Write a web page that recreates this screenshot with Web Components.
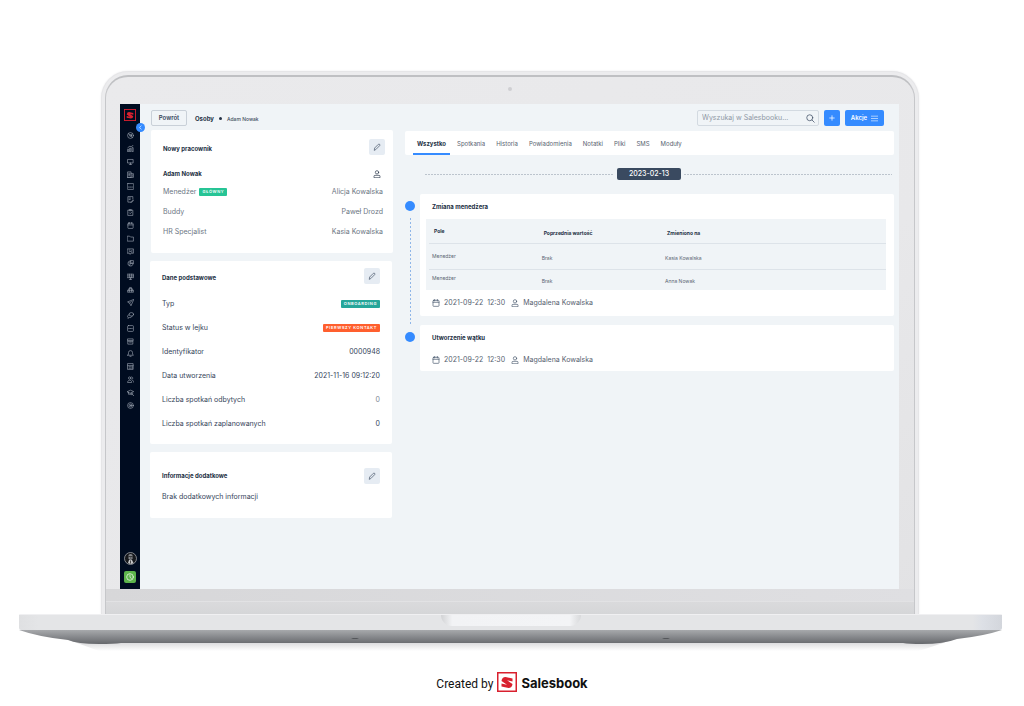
<!DOCTYPE html>
<html lang="pl">
<head>
<meta charset="utf-8">
<meta name="viewport" content="width=device-width, initial-scale=1">
<title>Salesbook – Adam Nowak</title>
<style>
  body { margin: 0; background: #fff; font-family: Inter, "Liberation Sans", sans-serif; color: #2d3a4b; }
</style>
</head>
<body>
<salesbook-page></salesbook-page>

<script>
const ICONS = {
  dash: '<circle cx="12" cy="12" r="10"/><circle cx="12" cy="12" r="3"/><path d="M5 6l5 4M14 14l4 5M18 7l-4 3"/>',
  chart: '<path d="M2 22v-7h4v7zM9 22V11h4v11zM17 22V9h4v13zM3 9l7-5 4 2 7-5"/>',
  monitor: '<path d="M3 5h18v12H3zM8 22h8M12 17v5"/>',
  building: '<path d="M2 22V3h12v19zM14 9h8v13H2M6 8h4M6 12h4M6 16h4M18 13v5"/>',
  crm: '<rect x="1" y="2" width="22" height="20" rx="2"/><path d="M5 14h3M11 14h3M17 14h2"/>',
  note: '<path d="M20 10V2H3v19h9M7 7h5M7 12h4M14 20l7-7 2 2-7 7h-2z"/>',
  task: '<path d="M4 4h16v18H4zM9 2h6v4H9zM8 13l3 3 5-5"/>',
  calendar: '<rect x="3" y="4" width="18" height="18" rx="2"/><path d="M3 10h18M8 1v5M16 1v5"/>',
  folder: '<path d="M2 4h7l3 3h10v14H2z"/>',
  board: '<path d="M2 3h20v15h-8l-4 4v-4H2zM6 14l4-4 3 3 5-6M7 7h3M15 14h3"/>',
  globe: '<path d="M14 3a9 9 0 1 0 7 11M12 12h10M13 2h9v8h-9zM6 8l5 4-2 7"/>',
  grid: '<path d="M1 4h22v12H1zM1 10h22M8 4v12M16 4v12M12 16v6M8 22h8"/>',
  team: '<path d="M2 20l4-11h12l4 11zM2 15h20M9 9l-1 11M15 9l1 11M9 5h6"/>',
  send: '<path d="M22 2L2 10l7 4 4 8zM9 14l6-6"/>',
  chat: '<ellipse cx="15" cy="8" rx="8" ry="6"/><path d="M7 9c-7 3-6 8-3 9l-1 4 5-3c5 1 9-1 9-5"/>',
  sms: '<rect x="2" y="2" width="20" height="20" rx="3"/><path d="M6 12h2M11 12h2M16 12h2"/>',
  archive: '<path d="M3 3h18v7H3zM4 10h16v11H4zM9 14h6"/>',
  bell: '<path d="M2 18h20l-3-4V9a7 7 0 0 0-14 0v5zM10 22h4"/>',
  calc: '<path d="M3 2h18v20H3zM3 9h18M7 13h2M12 13h2M7 18h2M12 18h2M18 12v7"/>',
  users: '<circle cx="9" cy="7" r="4"/><path d="M2 21c0-9 14-9 14 0zM16 3c6 1 5 8 0 8M18 14c4 1 5 4 5 7"/>',
  grad: '<path d="M1 9l11-5 11 5-11 5zM5 11v7h7M14 17a3 3 0 1 0 6 0a3 3 0 1 0-6 0M20 20l3 3"/>',
  gear: '<circle cx="12" cy="12" r="10"/><circle cx="12" cy="12" r="5"/><circle cx="12" cy="12" r="1"/>',
  pencil: '<path d="M4 21l1-6L16 4q2-2 4 0t0 4L9 19z"/>',
  person: '<circle cx="12" cy="7" r="5"/><path d="M3 22v-3q0-3 3-3h12q3 0 3 3v3z"/>',
  search: '<circle cx="10" cy="10" r="8"/><path d="M16 16l6 6"/>',
  plus: '<path d="M12 3v18M3 12h18"/>',
  menu: '<path d="M1 4h22M1 12h22M1 20h22"/>',
  left: '<path d="M15 4l-7 8 7 8"/>',
  clock: '<circle cx="12" cy="12" r="10"/><path d="M12 6v7l4 3"/>'
};

function define(name, css, html, setup) {
  const tpl = document.createElement('template');
  tpl.innerHTML = '<style>*{box-sizing:border-box}' + css + '</style>' + html;
  customElements.define(name, class extends HTMLElement {
    constructor() {
      super();
      this.attachShadow({ mode: 'open' }).append(tpl.content.cloneNode(true));
    }
    connectedCallback() { if (setup) setup(this, this.shadowRoot); }
  });
}

define('ui-icon',
  ':host{display:inline-block;width:8px;height:8px;flex:none}svg{display:block;width:100%;height:100%;fill:none;stroke:currentColor;stroke-width:var(--stroke,2);stroke-linejoin:round;stroke-linecap:round}',
  '<svg viewBox="0 0 24 24" aria-hidden="true"></svg>',
  (el, root) => { root.querySelector('svg').innerHTML = ICONS[el.getAttribute('name')] || ''; });

define('brand-mark',
  ':host{display:block;flex:none}svg{display:block;width:100%;height:100%}',
  `<svg viewBox="0 0 40 40" role="img" aria-label="Salesbook"><rect x="1.5" y="1.5" width="37" height="37" fill="none" stroke="#d9202e" stroke-width="3"/>
   <path fill="#d9202e" d="M17 10L31 13V19L20 16.500L31 24Q30 32 23 32L9 29V23L20 25.500L9 18Q10 10 17 10Z"/></svg>`);

define('status-badge',
  ':host{display:inline-flex;align-items:center;height:8px;padding:0 3px;border-radius:1px;background:var(--tone,#26c495);color:#fff;font-size:4px;line-height:8px;font-weight:600;letter-spacing:.15em;white-space:nowrap;text-transform:uppercase}',
  '<slot></slot>');

define('edit-button',
  ':host{display:block}button{display:grid;place-items:center;width:16px;height:16px;border:0;border-radius:2px;padding:0;background:#e6ecf3;color:#3c4c61}',
  '<button type="button" aria-label="Edytuj"><ui-icon name="pencil"></ui-icon></button>');

define('side-nav',
  `:host{display:flex;flex-direction:column;align-items:center;background:#000c20;color:#a9b1bd;padding:5px 0 6px;position:relative}
   brand-mark{width:12px;height:12px;margin-bottom:11px}
   nav{display:flex;flex-direction:column;justify-content:space-between;height:277px}
   a{display:block;color:inherit;height:7px}
   ui-icon{width:7px;height:7px;display:block}
   .toggle{position:absolute;right:-5px;top:19px;width:9px;height:9px;border:0;border-radius:50%;padding:0;background:#358bff;color:#fff;display:grid;place-items:center;z-index:1}
   .toggle ui-icon{width:5px;height:5px}
   .avatar{width:13px;height:13px;margin-top:auto;margin-bottom:6px}
   .timer{width:12px;height:12px;border:0;border-radius:2px;padding:0;background:#5db54b;color:#fff;display:grid;place-items:center}
   .timer ui-icon{width:8px;height:8px}`,
  `<brand-mark></brand-mark>
   <button class="toggle" type="button" aria-label="Zwiń menu"><ui-icon name="left" style="--stroke:3"></ui-icon></button>
   <nav aria-label="Menu główne"></nav>
   <svg class="avatar" viewBox="0 0 26 26" aria-hidden="true"><circle cx="13" cy="13" r="12" fill="#16181c" stroke="#a5a8ad" stroke-width="1.500"/><path d="M9 6q4-4 8 0v7q-4 6-8 0z" fill="#85888d"/><path d="M8 22l2-6h6l3 6q-5 4-11 0z" fill="#c5c6c8"/><path d="M9 9h8M12 12h3M13 17v6" stroke="#222" stroke-width="1.500"/></svg>
   <button class="timer" type="button" aria-label="Czas pracy"><ui-icon name="clock"></ui-icon></button>`,
  (el, root) => {
    const names = 'dash chart monitor building crm note task calendar folder board globe grid team send chat sms archive bell calc users grad gear'.split(' ');
    root.querySelector('nav').innerHTML = names.map(n => `<a href="#${n}" aria-label="${n}"><ui-icon name="${n}"></ui-icon></a>`).join('');
  });

define('top-bar',
  `:host{display:flex;align-items:center;height:16px;padding:0 10px 0 1px;font-size:6px;line-height:16px}
   button{font:inherit;height:16px;border-radius:2px;padding:0;border:0;display:flex;align-items:center;justify-content:center}
   .back{width:36px;border:1px solid #c9d0d8;background:transparent;color:#35455a;font-weight:600;line-height:16px}
   nav{display:flex;align-items:center;gap:5px;margin-left:8px;padding-top:1px}
   nav a{color:#233044;font-weight:700;text-decoration:none}
   nav i{width:3px;height:3px;border-radius:50%;background:#233044}
   nav span{font-size:5px;font-weight:500;color:#414e60}
   label{display:flex;align-items:center;width:122px;height:16px;margin-left:auto;border:1px solid #d3dae1;border-radius:2px;padding:0 3px 0 4px;color:#415067}
   label ui-icon{width:9px;height:9px}
   input{flex:1;min-width:0;border:0;outline:0;background:none;padding:0;font:inherit;font-size:7px;line-height:14px;color:#34435a}
   input::placeholder{color:#8f98a5;opacity:1}
   .add,.actions{background:#358bff;color:#fff}
   .add{width:16px;margin-left:5px}.add ui-icon{width:6px;height:6px;--stroke:3}
   .actions{width:39px;margin-left:5px;gap:4px;font-weight:600}
   .actions ui-icon{width:7px;height:7px}`,
  `<button class="back" type="button">Powrót</button>
   <nav aria-label="Okruszki"><a href="#osoby">Osoby</a><i></i><span>Adam Nowak</span></nav>
   <label><input type="search" aria-label="Szukaj" placeholder="Wyszukaj w Salesbooku..."><ui-icon name="search"></ui-icon></label>
   <button class="add" type="button" aria-label="Dodaj"><ui-icon name="plus"></ui-icon></button>
   <button class="actions" type="button">Akcje<ui-icon name="menu"></ui-icon></button>`);

define('info-card',
  `:host{display:block;background:#fff;border-radius:2px;padding:7px 12px 8px;margin-right:1px}
   header{display:flex;justify-content:space-between;align-items:center;height:16px}
   h2{margin:0;padding-top:3px;font-size:6px;line-height:16px;font-weight:700;color:#233044}
   .rows{display:block;padding-top:8px}
   :host([kind=people]){margin:0 0 0 1px;padding:9px 8px 11px 12px}
   :host([kind=people]) .rows{padding:11px 2px 0 0}
   :host([kind=extra]){padding:16px 12px 13px}
   :host([kind=extra]) h2{padding-top:0}
   :host([kind=extra]) .rows{padding-top:5px}`,
  '<header><h2></h2><edit-button></edit-button></header><div class="rows"><slot></slot></div>',
  (el, root) => { root.querySelector('h2').textContent = el.getAttribute('heading'); });

define('info-row',
  `:host{display:flex;align-items:center;justify-content:space-between;height:24px;font-size:7px;line-height:16px;color:#35445a}
   :host([kind=person]){height:20px;color:#6c7683}
   :host([kind=name]){height:16px;font-size:6px;font-weight:700;color:#233044;padding-right:2px}
   :host([kind=text]){height:16px}
   .label{display:flex;align-items:center;gap:3px}`,
  '<span class="label"><slot></slot></span><slot name="value"></slot>');

define('tab-bar',
  `:host{display:flex;gap:3px;height:24px;padding-left:8px;background:#fff;border-radius:2px}
   button{border:0;border-bottom:2px solid transparent;background:none;padding:3px 4px 0;font:inherit;font-size:6px;line-height:18px;color:#57626f}
   button[aria-selected=true]{font-weight:700;color:#233044;border-bottom-color:#358bff}`,
  '',
  (el, root) => {
    el.setAttribute('role', 'tablist');
    for (const [i, t] of el.getAttribute('items').split(',').entries()) {
      const b = document.createElement('button');
      b.type = 'button'; b.textContent = t;
      b.setAttribute('role', 'tab'); b.setAttribute('aria-selected', i === 0);
      root.append(b);
    }
  });

define('date-divider',
  `:host{display:flex;align-items:center;gap:3px;height:12px;margin:13px 2px 14px 20px}
   i{flex:10;height:1px;background:repeating-linear-gradient(90deg,#bcc4cd 0 2px,transparent 2px 3px)}
   i:last-child{flex:11}
   time{width:64px;text-align:center;border-radius:2px;background:#3a4a60;color:#fff;font-size:7px;line-height:12px;font-weight:500}`,
  '<i></i><time><slot></slot></time><i></i>');

define('meta-line',
  `:host{display:flex;align-items:center;gap:4px;height:10px;font-size:7px;line-height:10px;color:#56616f;white-space:pre}
   .who{margin-left:2px}ui-icon{color:#44546a;width:8px;height:8px}`,
  '<ui-icon name="calendar"></ui-icon><slot></slot><ui-icon class="who" name="person"></ui-icon><slot name="who"></slot>');

define('timeline-item',
  `:host{display:grid;grid-template-columns:10px minmax(0,1fr);column-gap:5px}
   .rail{display:flex;flex-direction:column;align-items:center;padding-top:7px}
   .dot{width:10px;height:10px;border-radius:50%;background:#358bff;flex:none}
   .line{display:none;flex:1;width:1px;margin-top:7px;background:repeating-linear-gradient(#8fb6e8 0 2px,transparent 2px 4px)}
   :host([linked]) .line{display:block}
   article{background:#fff;border-radius:2px;padding:6px 8px 6px 6px;margin-bottom:9px}
   h3{margin:0 0 0 6px;font-size:6px;line-height:14px;font-weight:700;color:#233044}
   .meta{margin:10px 0 0 6px}
   :host([linked]) .meta{margin-top:8px;margin-bottom:2px}`,
  '<div class="rail"><span class="dot"></span><span class="line"></span></div><article><h3></h3><slot></slot><div class="meta"><slot name="meta"></slot></div></article>',
  (el, root) => { root.querySelector('h3').textContent = el.getAttribute('heading'); });

define('change-table',
  `:host{display:block;background:#f0f4f7;margin-top:5px;padding:0 0 0 3px}
   table{border-collapse:collapse;width:100%;table-layout:fixed;font-size:5px;line-height:8px;color:#5b6673}
   th,td{text-align:left;padding:5px 0 1px 3px;font-weight:400}
   th{height:24px;padding-left:5px;font-weight:700;color:#233044}
   td{height:26px}tr:last-child td{height:21px;padding-top:3px}
   th:first-child,tr td:first-child{padding-top:1px;padding-bottom:1px}
   tbody tr:last-child td:first-child{padding-top:0;padding-bottom:3px}
   tr{border-bottom:1px solid #dde3e9}tbody tr:last-child{border-bottom:0}
   .a{width:24%}.b{width:27%}`,
  `<table><colgroup><col class="a"><col class="b"><col></colgroup>
   <thead><tr><th scope="col">Pole</th><th scope="col">Poprzednia wartość</th><th scope="col">Zmieniono na</th></tr></thead>
   <tbody><tr><td>Menedżer</td><td>Brak</td><td>Kasia Kowalska</td></tr><tr><td>Menedżer</td><td>Brak</td><td>Anna Nowak</td></tr></tbody></table>`);

define('laptop-frame',
  `:host{display:block}
   .lid{margin:71px 105px 0 101px;border:1px solid #e6e6e8;border-bottom:0;border-radius:27px 27px 0 0;padding:3px 3px 0;background:#ececee;box-shadow:0 0 2px #e8e8ea}
   .bezel{border:1px solid #c6c7ca;border-top:2px solid #bfc0c3;border-bottom:0;border-radius:23px 23px 0 0;background:linear-gradient(150deg,#eaeaec,#e8e8ea 60%,#e2e2e4)}
   .camera{height:27px;display:flex;justify-content:center;align-items:center;padding-bottom:4px}
   .camera i{width:4px;height:4px;border-radius:50%;background:#cfcfd2}
   .screen{margin:0 15px 0 14px;min-height:485px;display:grid}
   .chin{height:25px;padding-top:12px;background:linear-gradient(90deg,#d7d7d9,#dfdfe2)}
   .chin i{display:block;height:13px;border-top:1px solid #e2e2e4;background:linear-gradient(#dadadc,#d5d6d8)}
   .deck{margin:0 22px 0 19px;height:16px;border-radius:1px 1px 2px 2px;background:linear-gradient(90deg,#dfe0e2,#e4e5e7 2%,#e4e5e7 97%,#dde0e6 98%,#d3d6dc);border-top:1px solid #f0f0f2}
   .notch{width:140px;height:11px;margin:0 auto;border-radius:0 0 11px 11px;background:linear-gradient(90deg,#d2d3d5,#f2f3f5 8%,#f3f4f6 92%,#d8d9db)}
   .under{margin:0 22px 0 19px}
   .under svg{display:block;width:100%;height:22px}`,
  `<div class="lid"><div class="bezel"><div class="camera"><i></i></div><div class="screen"><slot></slot></div><div class="chin"><i></i></div></div></div>
   <div class="deck"><div class="notch"></div></div>
   <div class="under"><svg viewBox="0 0 983 22" preserveAspectRatio="none" aria-hidden="true">
     <defs><linearGradient id="g" x2="0" y2="1"><stop stop-color="#a7a9ac"/><stop offset="1" stop-color="#66686c"/></linearGradient>
     <linearGradient id="s" x2="0" y2="1"><stop stop-color="#cfcfd1"/><stop offset="1" stop-color="#fff"/></linearGradient></defs>
     <path d="M50 10H933L900 21H80z" fill="url(#s)"/>
     <path d="M0 0H983Q965 6 938 9Q925 14 903 14Q890 14 884 13H102Q95 14 80 14Q58 14 49 10Q20 7 0 0z" fill="url(#g)"/>
     <path d="M332 8h8l-2 1h-4zM643 8h8l-2 1h-4z" fill="#55575b"/>
   </svg></div>`);

define('brand-credit',
  `:host{display:flex;justify-content:center;align-items:center;gap:4px;padding-top:20px;height:40px;color:#111;line-height:20px}
   .by{font-family:Roboto,Inter,sans-serif;font-size:12px;padding-top:3px}
   brand-mark{width:20px;height:20px}
   strong{font-family:Inter,sans-serif;font-size:13px;font-weight:700;padding-top:2px}`,
  '<span class="by">Created by</span><brand-mark></brand-mark><strong>Salesbook</strong>');

define('salesbook-page',
  `:host{display:block}
   .app{display:grid;grid-template-columns:20px minmax(0,1fr);background:#f0f4f7}
   .main{padding:6px 5px 0 10px}
   .body{display:grid;grid-template-columns:243px minmax(0,1fr);gap:12px;margin-top:4px;align-items:start}
   .cards{display:flex;flex-direction:column;gap:8px}
   .feed{padding-top:1px}
   .muted{color:#7d8793}`,
  `<laptop-frame><div class="app"><side-nav></side-nav><div class="main">
    <top-bar></top-bar>
    <div class="body">
     <section class="cards">
      <info-card kind="people" heading="Nowy pracownik">
       <info-row kind="name">Adam Nowak<ui-icon slot="value" name="person"></ui-icon></info-row>
       <info-row kind="person">Menedżer <status-badge>Główny</status-badge><span slot="value">Alicja Kowalska</span></info-row>
       <info-row kind="person">Buddy<span slot="value">Paweł Drozd</span></info-row>
       <info-row kind="person">HR Specjalist<span slot="value">Kasia Kowalska</span></info-row>
      </info-card>
      <info-card heading="Dane podstawowe">
       <info-row>Typ<status-badge slot="value" style="--tone:#26a69a">Onboarding</status-badge></info-row>
       <info-row>Status w lejku<status-badge slot="value" style="--tone:#ff5f2e">Pierwszy kontakt</status-badge></info-row>
       <info-row>Identyfikator<span slot="value">0000948</span></info-row>
       <info-row>Data utworzenia<span slot="value">2021-11-16 09:12:20</span></info-row>
       <info-row>Liczba spotkań odbytych<span slot="value" class="muted">0</span></info-row>
       <info-row>Liczba spotkań zaplanowanych<span slot="value">0</span></info-row>
      </info-card>
      <info-card kind="extra" heading="Informacje dodatkowe">
       <info-row kind="text">Brak dodatkowych informacji</info-row>
      </info-card>
     </section>
     <section class="feed">
      <tab-bar items="Wszystko,Spotkania,Historia,Powiadomienia,Notatki,Pliki,SMS,Moduły"></tab-bar>
      <date-divider>2023-02-13</date-divider>
      <timeline-item linked heading="Zmiana menedżera">
       <change-table></change-table>
       <meta-line slot="meta"><span>2021-09-22&nbsp; 12:30</span><span slot="who">Magdalena Kowalska</span></meta-line>
      </timeline-item>
      <timeline-item heading="Utworzenie wątku">
       <meta-line slot="meta"><span>2021-09-22&nbsp; 12:30</span><span slot="who">Magdalena Kowalska</span></meta-line>
      </timeline-item>
     </section>
    </div></div></div></laptop-frame>
   <brand-credit></brand-credit>`);
</script>
</body>
</html>
